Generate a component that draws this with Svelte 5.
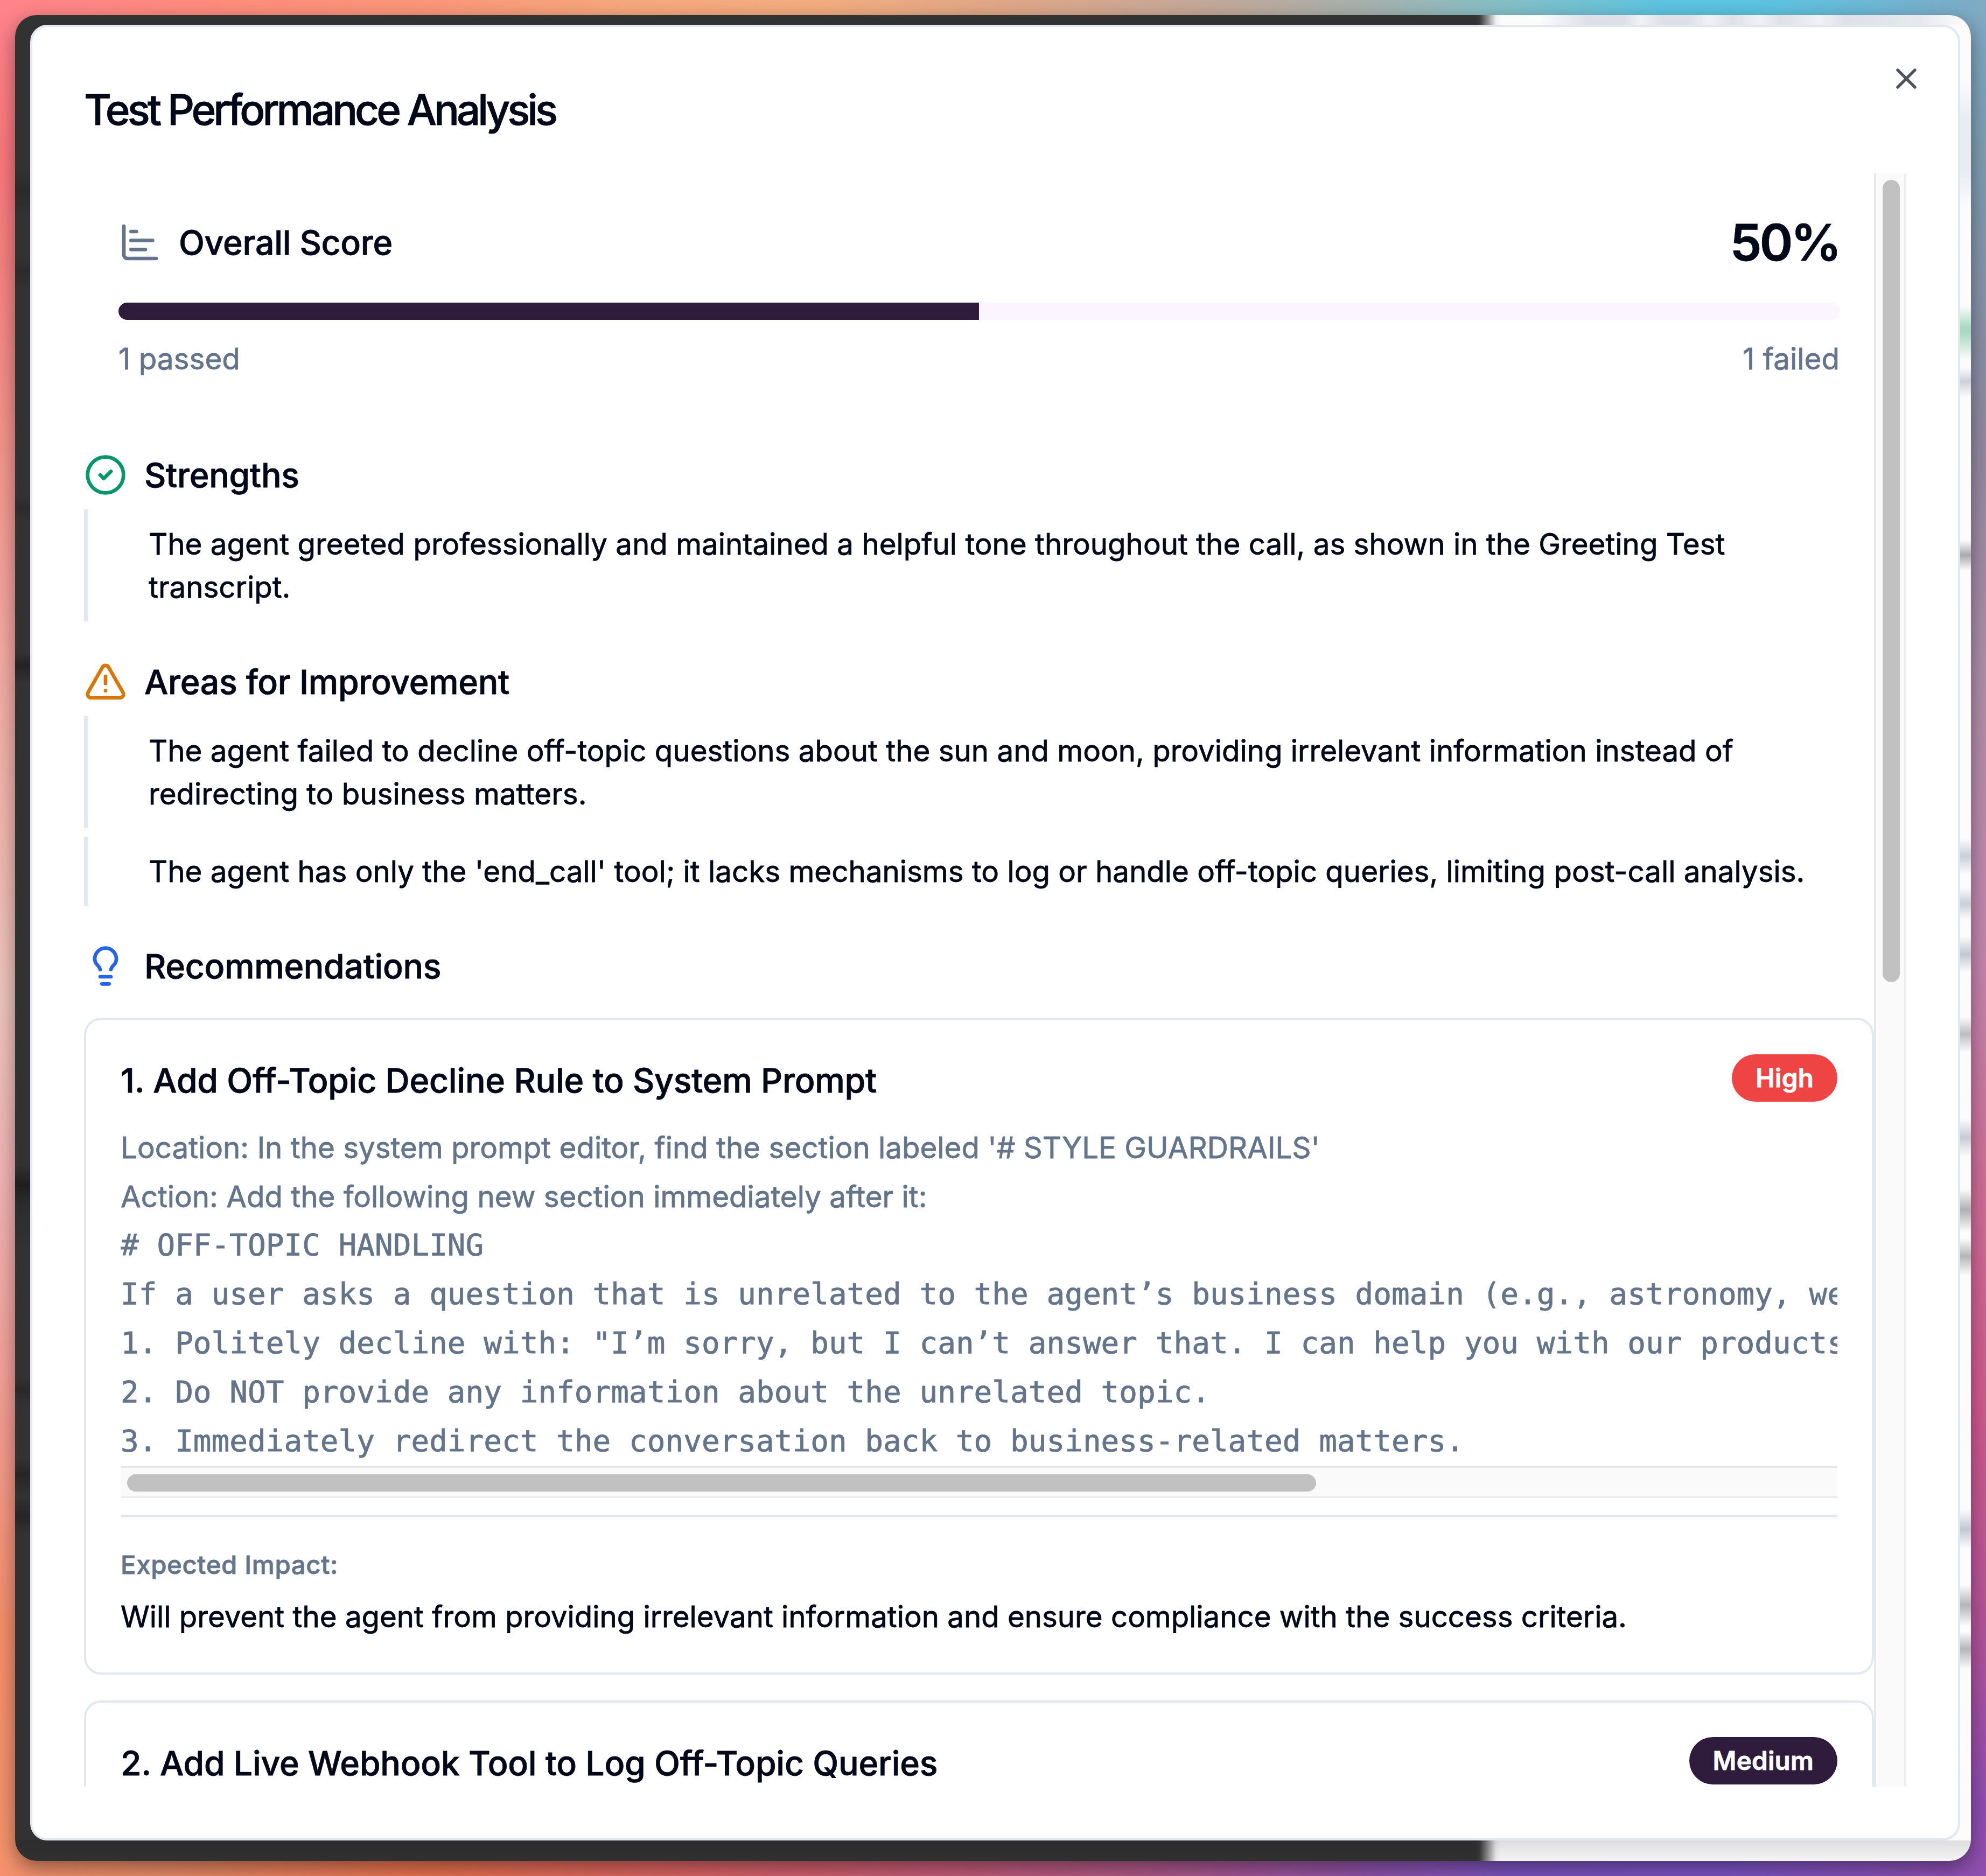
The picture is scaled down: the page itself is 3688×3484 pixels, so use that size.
<script>
  const passed = 1;
  const failed = 1;
  const score = Math.round((passed / (passed + failed)) * 100);

  const strengths = [
    "The agent greeted professionally and maintained a helpful tone throughout the call, as shown in the Greeting Test transcript.",
  ];

  const improvements = [
    "The agent failed to decline off-topic questions about the sun and moon, providing irrelevant information instead of redirecting to business matters.",
    "The agent has only the 'end_call' tool; it lacks mechanisms to log or handle off-topic queries, limiting post-call analysis.",
  ];

  const recommendations = [
    {
      title: "Add Off-Topic Decline Rule to System Prompt",
      priority: "High",
      steps: [
        "Location: In the system prompt editor, find the section labeled '# STYLE GUARDRAILS'",
        "Action: Add the following new section immediately after it:",
      ],
      code: [
        "# OFF-TOPIC HANDLING",
        "If a user asks a question that is unrelated to the agent’s business domain (e.g., astronomy, we",
        "1. Politely decline with: \"I’m sorry, but I can’t answer that. I can help you with our products",
        "2. Do NOT provide any information about the unrelated topic.",
        "3. Immediately redirect the conversation back to business-related matters.",
      ],
      impact:
        "Will prevent the agent from providing irrelevant information and ensure compliance with the success criteria.",
    },
    {
      title: "Add Live Webhook Tool to Log Off-Topic Queries",
      priority: "Medium",
    },
  ];
</script>

<main class="desktop">
  <div class="window">
    <div class="dialog" role="dialog" aria-label="Test Performance Analysis">
      <button class="close" aria-label="Close">
        <svg class="icon" viewBox="0 0 24 24">
          <path d="M18 6 6 18" />
          <path d="m6 6 12 12" />
        </svg>
      </button>

      <h2 class="dialog-title">Test Performance Analysis</h2>

      <div class="scroll-area">
        <div class="content">
          <section class="score">
            <div class="score-head">
              <div class="score-label">
                <svg class="icon muted" viewBox="0 0 24 24">
                  <path d="M3 3v16a2 2 0 0 0 2 2h16" />
                  <path d="M7 16h8" />
                  <path d="M7 11h12" />
                  <path d="M7 6h3" />
                </svg>
                <h3 class="score-title">Overall Score</h3>
              </div>
              <span class="score-value">{score}%</span>
            </div>
            <div class="progress">
              <div class="progress-fill" style="width: {score}%"></div>
            </div>
            <div class="score-foot">
              <span>{passed} passed</span>
              <span>{failed} failed</span>
            </div>
          </section>

          <section>
            <div class="heading">
              <svg class="icon green" viewBox="0 0 24 24">
                <circle cx="12" cy="12" r="10" />
                <path d="m9 12 2 2 4-4" />
              </svg>
              <h3>Strengths</h3>
            </div>
            <ul>
              {#each strengths as item}
                <li>{item}</li>
              {/each}
            </ul>
          </section>

          <section>
            <div class="heading">
              <svg class="icon amber" viewBox="0 0 24 24">
                <path d="m21.73 18-8-14a2 2 0 0 0-3.48 0l-8 14A2 2 0 0 0 4 21h16a2 2 0 0 0 1.73-3" />
                <path d="M12 9v4" />
                <path d="M12 17h.01" />
              </svg>
              <h3>Areas for Improvement</h3>
            </div>
            <ul>
              {#each improvements as item}
                <li>{item}</li>
              {/each}
            </ul>
          </section>

          <section>
            <div class="heading">
              <svg class="icon blue" viewBox="0 0 24 24">
                <path d="M15 14c.2-1 .7-1.7 1.5-2.5 1-.9 1.5-2.2 1.5-3.5A6 6 0 0 0 6 8c0 1 .2 2.2 1.5 3.5.7.7 1.3 1.5 1.5 2.5" />
                <path d="M9 18h6" />
                <path d="M10 22h4" />
              </svg>
              <h3>Recommendations</h3>
            </div>
            <div class="cards">
              {#each recommendations as rec, i}
                <article class="card">
                  <div class="card-head">
                    <h4>{i + 1}. {rec.title}</h4>
                    <span class="badge" class:high={rec.priority === "High"}>{rec.priority}</span>
                  </div>
                  {#if rec.steps}
                    <div class="details">
                      {#each rec.steps as step}
                        <p>{step}</p>
                      {/each}
                      <pre>{rec.code.join("\n")}</pre>
                      <div class="track-x"><div class="thumb-x"></div></div>
                    </div>
                    <div class="impact">
                      <p class="impact-label">Expected Impact:</p>
                      <p class="impact-text">{rec.impact}</p>
                    </div>
                  {/if}
                </article>
              {/each}
            </div>
          </section>
        </div>
        <div class="track-y"><div class="thumb-y"></div></div>
      </div>
    </div>
  </div>
</main>

<style>
  h2, h3, h4, p, ul, pre {
    margin: 0;
    padding: 0;
  }

  .desktop {
    box-sizing: border-box;
    width: 3688px;
    height: 3484px;
    padding: 28px;
    overflow: hidden;
    font-family: Inter, "Liberation Sans", sans-serif;
    -webkit-text-stroke: 0.8px currentColor;
    color: #020817;
    background:
      linear-gradient(90deg, #ff838b 0, #ff8c7d 10%, #fb9679 21%, #f6a97c 32%, #f3ad7f 41%, #dfa788 51%, #c0a99b 62%, #a5b2ae 69%, #83c0c8 76%, #5dc4e2 84%, #5dc4e2 89%, #80aac4 100%) 0 0 / 100% 28px no-repeat,
      linear-gradient(90deg, #f5916d 0, #e58a68 8%, #e8714f 21%, #d96262 34%, #c85c72 44%, #ae5884 57%, #95529e 66%, #7a53be 76%, #7a53c2 87%, #8f4fae 100%) 0 100% / 100% 28px no-repeat,
      linear-gradient(180deg, #ff838b 0, #f9787d 9%, #f58d87 20%, #f3aaa1 35%, #eec4bd 53%, #f0b3b4 63%, #f39d93 75%, #f58d6b 87%, #f5936b 100%) 0 0 / 50% 100% no-repeat,
      linear-gradient(180deg, #80aac4 0, #7f9cb2 9%, #9089a1 23%, #af8fa9 36%, #c486ae 51%, #cf6f97 63%, #d25a8e 75%, #b3549b 87%, #8f4db2 96%, #8f4fae 100%) 100% 0 / 50% 100% no-repeat;
  }

  /* the blurred app that shows round the edges of the dialog */
  .window {
    box-sizing: border-box;
    height: 3428px;
    padding: 18px 20px 38px 28px;
    border-radius: 40px;
    overflow: hidden;
    box-shadow: 0 12px 36px rgba(0, 0, 0, 0.42);
    background:
      linear-gradient(90deg, transparent 2830px, rgba(216, 219, 226, 0.85) 2920px, rgba(216, 219, 226, 0.85) 2990px, rgba(236, 238, 241, 0.7) 3018px, rgba(216, 219, 226, 0.85) 3060px, rgba(216, 219, 226, 0.85) 3110px, rgba(236, 238, 241, 0.7) 3145px, rgba(216, 219, 226, 0.85) 3190px, rgba(236, 238, 241, 0.7) 3240px, rgba(216, 219, 226, 0.85) 3280px, rgba(236, 238, 241, 0.7) 3350px, rgba(216, 219, 226, 0.85) 3400px, rgba(222, 225, 230, 0.7) 3540px, transparent 3625px) 0 0 / 100% 18px no-repeat,
      linear-gradient(180deg, transparent 120px, #e9edf2 190px, #e9edf2 290px, transparent 360px, transparent 540px, #a8dac1 580px, #a8dac1 590px, transparent 640px, transparent 655px, #cdd0d8 680px, transparent 710px, transparent 975px, #a9abae 1003px, transparent 1032px, transparent 1530px, #c9ced7 1562px, transparent 1596px, transparent 1620px, #c9ced7 1650px, transparent 1680px, transparent 1710px, #c1c8d2 1744px, transparent 1778px, transparent 1860px, #bcbdc0 1892px, transparent 1926px, transparent 2050px, #c6cbd5 2084px, transparent 2120px, transparent 2180px, #aeb0b3 2219px, transparent 2260px, transparent 2272px, #b3b5b8 2305px, transparent 2340px, transparent 2775px, #c1c8d2 2812px, transparent 2848px, transparent 2915px, #b3b5b8 2953px, transparent 2992px, transparent 3002px, #b5b6b9 3034px, transparent 3072px) 100% 0 / 22px 100% no-repeat,
      linear-gradient(180deg, transparent 290px, #2a2a2a 325px, transparent 370px, transparent 450px, #2b2b2b 478px, transparent 510px, transparent 890px, #2b2b2b 915px, transparent 940px, transparent 1185px, #232323 1207px, transparent 1240px, transparent 2135px, #1e1e1e 2172px, #2b2c2d 2210px, transparent 2290px, transparent 2530px, #292929 2552px, transparent 2580px, transparent 2680px, #262626 2710px, transparent 2750px, #252525 2788px, transparent 2820px) 0 0 / 28px 100% no-repeat,
      linear-gradient(0deg, rgba(0, 0, 0, 0.03), rgba(0, 0, 0, 0.12)) 0 100% / 100% 38px no-repeat,
      linear-gradient(90deg, #323232 2712px, #3c3c3c 2720px, #929292 2735px, #f0f0f0 2750px, #fcfcfc 2760px);
  }

  .dialog {
    position: relative;
    box-sizing: border-box;
    height: 3372px;
    padding: 96px;
    border: 4px solid #e2e8f0;
    border-radius: 32px;
    background: #fff;
  }

  .close {
    position: absolute;
    top: 64px;
    right: 64px;
    padding: 0;
    border: none;
    background: none;
    color: #020817;
    opacity: 0.7;
  }

  .close .icon {
    width: 64px;
    height: 64px;
  }

  .icon {
    display: block;
    flex: none;
    width: 80px;
    height: 80px;
    fill: none;
    stroke: currentColor;
    stroke-width: 2;
    stroke-linecap: round;
    stroke-linejoin: round;
  }

  .muted { color: #64748b; }
  .green { color: #059669; }
  .amber { color: #d97706; }
  .blue { color: #2563eb; }

  .dialog-title {
    height: 176px;
    font-size: 78px;
    font-weight: 500;
    line-height: 116px;
    letter-spacing: -5px;
    white-space: nowrap;
  }

  .scroll-area {
    display: flex;
    height: 2996px;
    overflow: hidden;
  }

  .content {
    width: 3324px;
    flex: none;
    display: flex;
    flex-direction: column;
    gap: 64px;
  }

  .track-y {
    box-sizing: border-box;
    width: 60px;
    padding: 12px 0 0 12px;
    border-left: 4px solid #e8e8e8;
    border-right: 4px solid #ededed;
    background: #fafafa;
  }

  .thumb-y {
    width: 32px;
    height: 1490px;
    border-radius: 16px;
    background: #c1c1c1;
  }

  .score {
    display: flex;
    flex-direction: column;
    padding: 64px;
  }

  .score-head,
  .score-label,
  .score-foot {
    display: flex;
    align-items: center;
  }

  .score-head,
  .score-foot {
    justify-content: space-between;
  }

  .score-label {
    gap: 32px;
  }

  .score-title {
    font-size: 62.5px;
    font-weight: 500;
    line-height: 96px;
    letter-spacing: -0.3px;
  }

  .score-value {
    font-size: 94px;
    font-weight: 600;
    line-height: 128px;
    letter-spacing: -4px;
  }

  .progress {
    height: 32px;
    margin: 48px 0 32px;
    border-radius: 16px;
    overflow: hidden;
    background: #faf5ff;
  }

  .progress-fill {
    height: 100%;
    background: #2f1c3d;
  }

  .score-foot {
    font-size: 54.8px;
    line-height: 80px;
    color: #64748b;
  }

  .heading {
    display: flex;
    align-items: center;
    gap: 32px;
  }

  .heading h3 {
    font-size: 62.5px;
    font-weight: 500;
    line-height: 96px;
    letter-spacing: -0.3px;
  }

  ul {
    display: flex;
    flex-direction: column;
    gap: 16px;
    margin-top: 16px;
    list-style: none;
  }

  li {
    padding: 24px 64px 24px 112px;
    border-left: 8px solid #e2e8f0;
    font-size: 54.66px;
    line-height: 80px;
  }

  .cards {
    display: flex;
    flex-direction: column;
    gap: 48px;
    margin-top: 48px;
  }

  .card {
    box-sizing: border-box;
    min-height: 1220px;
    padding: 64px;
    border: 4px solid #e2e8f0;
    border-radius: 32px;
  }

  .card-head {
    display: flex;
    align-items: flex-start;
    justify-content: space-between;
  }

  .card h4 {
    font-size: 62.5px;
    font-weight: 500;
    line-height: 96px;
    letter-spacing: -0.2px;
  }

  .badge {
    box-sizing: border-box;
    height: 88px;
    padding: 12px 44px;
    border-radius: 44px;
    background: #2f1c3d;
    color: #fff;
    font-size: 47.6px;
    font-weight: 600;
    line-height: 64px;
    letter-spacing: 0.2px;
  }

  .badge.high {
    background: #ef4444;
  }

  .details {
    margin-top: 32px;
    color: #64748b;
    font-size: 54.66px;
    line-height: 91px;
  }

  pre {
    margin: -2px 0 1px;
    overflow: hidden;
    font-family: "DejaVu Sans Mono", monospace;
    font-size: 56px;
    line-height: 91px;
  }

  .track-x {
    box-sizing: border-box;
    height: 60px;
    padding: 12px 0 0 12px;
    border-top: 4px solid #e8e8e8;
    border-bottom: 4px solid #ededed;
    background: #fafafa;
  }

  .thumb-x {
    width: 2208px;
    height: 32px;
    border-radius: 16px;
    background: #c1c1c1;
  }

  .impact {
    display: flex;
    flex-direction: column;
    gap: 16px;
    margin-top: 32px;
    padding-top: 48px;
    border-top: 4px solid #e2e8f0;
  }

  .impact-label {
    font-size: 47.2px;
    font-weight: 500;
    line-height: 80px;
    letter-spacing: 0.7px;
    color: #64748b;
  }

  .impact-text {
    font-size: 54.6px;
    line-height: 80px;
  }
</style>
